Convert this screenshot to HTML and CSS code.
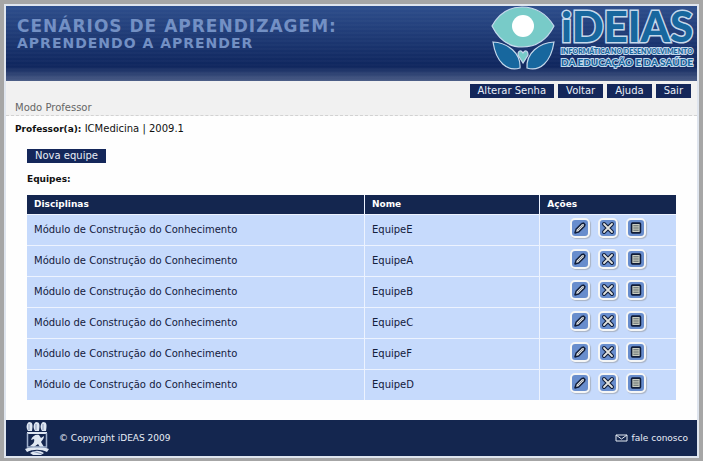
FILE: index.html
```html
<!DOCTYPE html>
<html lang="pt-BR">
<head>
<meta charset="utf-8">
<title>Cenários de Aprendizagem</title>
<link rel="stylesheet" href="styles.css">
</head>
<body>
<svg class="defs" aria-hidden="true">
  <symbol id="pencil" viewBox="0 0 18 18">
    <path d="M3.5 14.5 4.5 10.5 11 4 13 3.5 14.5 5 14 7 7.5 13.5Z" fill="#e2e4e2" stroke="#101c38" stroke-width="1.700" stroke-linejoin="round"/>
    <path d="M10.5 4.500 13.5 7.500M6.500 11.500 11.5 6.500" fill="none" stroke="#6f7889" stroke-width=".8"/>
    <path d="M3 15V12.800L5.200 15Z" fill="#101c38"/>
  </symbol>
  <symbol id="cross" viewBox="0 0 18 18">
    <path d="M4.500 4.500 13.500 13.500M13.500 4.500 4.500 13.500" stroke="#101c38" stroke-width="4.400" stroke-linecap="round"/>
    <path d="M4.500 4.500 13.500 13.500M13.500 4.500 4.500 13.500" stroke="#e2e3df" stroke-width="2" stroke-linecap="round"/>
  </symbol>
  <symbol id="list" viewBox="0 0 18 18">
    <rect x="4" y="3.500" width="10" height="11" rx="1" fill="#c9cdc0" stroke="#101c38" stroke-width="1.800"/>
    <path d="M6 6.500H12M6 9H12M6 11.500H12" stroke="#4f5a60" stroke-width="1"/>
  </symbol>
</svg>
<div class="page">
  <header class="banner">
    <div class="titles">
      <h1>CENÁRIOS DE APRENDIZAGEM:</h1>
      <p>APRENDENDO A APRENDER</p>
    </div>
    <svg class="logo" viewBox="0 0 208 66" role="img" aria-label="iDEIAS">
      <g stroke="#c5d9ec" stroke-width="1.200">
        <path d="M3 20C10 7 21 1 33 1S57 7 65 20C58 34 47 41 33 41S10 34 3 20Z" fill="#78cbc8"/>
        <path d="M4 36C19 37 32 47 31 62C18 66 7 56 4 36Z" fill="#17679e"/>
        <path d="M65 36C50 37 37 47 38 62C51 66 62 56 65 36Z" fill="#17679e"/>
        <path d="M34 57 29 49C29 44 32 44 34 47C36 44 39 44 39 49Z" fill="#78cbc8"/>
      </g>
      <circle cx="34" cy="20" r="11" fill="#fff"/>
      <text class="logo-name" x="72" y="36">iDEIAS</text>
      <text class="logo-line" x="72" y="48">INFORMÁTICA NO DESENVOLVIMENTO</text>
      <text class="logo-sub" x="72" y="60">DA EDUCAÇÃO E DA SAÚDE</text>
    </svg>
  </header>
  <div class="toolbar">
    <nav>
      <a class="btn" href="#">Alterar Senha</a>
      <a class="btn" href="#">Voltar</a>
      <a class="btn" href="#">Ajuda</a>
      <a class="btn" href="#">Sair</a>
    </nav>
    <p>Modo Professor</p>
  </div>
  <main>
    <p class="teacher"><b>Professor(a):</b> ICMedicina | 2009.1</p>
    <section class="teams">
      <button class="btn" type="button">Nova equipe</button>
      <h2>Equipes:</h2>
      <table>
        <thead><tr><th class="subject">Disciplinas</th><th class="name">Nome</th><th>Ações</th></tr></thead>
        <tbody>
          <tr><td>Módulo de Construção do Conhecimento</td><td>EquipeE</td><td><div class="actions"><button type="button" aria-label="Editar"><svg><use href="#pencil"/></svg></button><button type="button" aria-label="Excluir"><svg><use href="#cross"/></svg></button><button type="button" aria-label="Listar"><svg><use href="#list"/></svg></button></div></td></tr>
          <tr><td>Módulo de Construção do Conhecimento</td><td>EquipeA</td><td><div class="actions"><button type="button" aria-label="Editar"><svg><use href="#pencil"/></svg></button><button type="button" aria-label="Excluir"><svg><use href="#cross"/></svg></button><button type="button" aria-label="Listar"><svg><use href="#list"/></svg></button></div></td></tr>
          <tr><td>Módulo de Construção do Conhecimento</td><td>EquipeB</td><td><div class="actions"><button type="button" aria-label="Editar"><svg><use href="#pencil"/></svg></button><button type="button" aria-label="Excluir"><svg><use href="#cross"/></svg></button><button type="button" aria-label="Listar"><svg><use href="#list"/></svg></button></div></td></tr>
          <tr><td>Módulo de Construção do Conhecimento</td><td>EquipeC</td><td><div class="actions"><button type="button" aria-label="Editar"><svg><use href="#pencil"/></svg></button><button type="button" aria-label="Excluir"><svg><use href="#cross"/></svg></button><button type="button" aria-label="Listar"><svg><use href="#list"/></svg></button></div></td></tr>
          <tr><td>Módulo de Construção do Conhecimento</td><td>EquipeF</td><td><div class="actions"><button type="button" aria-label="Editar"><svg><use href="#pencil"/></svg></button><button type="button" aria-label="Excluir"><svg><use href="#cross"/></svg></button><button type="button" aria-label="Listar"><svg><use href="#list"/></svg></button></div></td></tr>
          <tr><td>Módulo de Construção do Conhecimento</td><td>EquipeD</td><td><div class="actions"><button type="button" aria-label="Editar"><svg><use href="#pencil"/></svg></button><button type="button" aria-label="Excluir"><svg><use href="#cross"/></svg></button><button type="button" aria-label="Listar"><svg><use href="#list"/></svg></button></div></td></tr>
        </tbody>
      </table>
    </section>
  </main>
  <footer>
    <svg class="crest" viewBox="0 0 26 35" aria-hidden="true">
      <g fill="#dfe7f2">
        <path d="M4 10C2 7 2 3 5 1C9 1 9 4 8 10ZM11 10C9 7 9 3 12 1C16 1 16 4 15 10ZM18 10C16 7 16 3 19 1C23 1 23 4 22 10Z"/>
        <path d="M3 11H23V13H3Z"/>
        <path d="M6 25C9 23 11 21 10 18L7 19C8 15 12 13 15 14L17 17 20 15C20 18 18 19 17 21L20 26H16L14 23 10 26Z"/>
        <path d="M1 28C8 25 18 25 25 28L23 31C17 28 9 28 3 31ZM6 32C11 29 15 29 20 32L17 34H9Z"/>
      </g>
      <path d="M3.500 12V26H22.500V12" fill="none" stroke="#9fb0cc" stroke-width="1.500"/>
      <path d="M5 3V9M12 3V9M19 3V9M8 30 18 33" stroke="#63779d" stroke-width=".7"/>
    </svg>
    <span>© Copyright iDEAS 2009</span>
    <a class="contact" href="#">
      <svg viewBox="0 0 13 8" aria-hidden="true"><path d="M1 1H12V7H1ZM1 1 6.500 5 12 1" fill="none" stroke="#e3e9f2"/></svg>
      fale conosco
    </a>
  </footer>
</div>
</body>
</html>
```
FILE: styles.css
```css
* {
  box-sizing: border-box;
}

body {
  margin: 0;
  padding: 4px 4px 3px;
  min-height: 100vh;
  background: #a6a6a6;
  color: #111;
  font: 10px/14px "DejaVu Sans", Verdana, sans-serif;
}

h1, h2, p {
  margin: 0;
}

a {
  color: inherit;
  text-decoration: none;
}

.defs {
  display: none;
}

.page {
  border: 2px solid #dfe5ee;
  background: #fefefe;
}

.banner {
  display: flex;
  justify-content: space-between;
  height: 75px;
  padding-left: 11px;
  background:
    repeating-linear-gradient(transparent 0 2px, rgba(255, 255, 255, .02) 2px 4px),
    linear-gradient(#2e4e8c, #0f265e 60px, #162c62 62px, #4a5c86);
  color: #7390c4;
}

.titles {
  padding-top: 11px;
  letter-spacing: 1px;
}

.titles h1 {
  font-size: 17px;
  line-height: 18px;
}

.titles p {
  font-size: 14px;
  font-weight: bold;
  line-height: 16px;
}

.logo {
  flex: none;
  width: 208px;
  height: 66px;
}

.logo text {
  font-family: Lato, sans-serif;
  font-weight: 900;
  fill: #17679e;
  stroke: #c5d9ec;
  paint-order: stroke;
}

.logo-name {
  font-size: 42px;
  stroke-width: 3px;
}

.logo .logo-line,
.logo .logo-sub {
  stroke-width: 2px;
}

.logo-line {
  font-size: 7px;
}

.logo-sub {
  font-size: 10px;
}

.toolbar {
  padding: 3px 6px 0 9px;
  border-bottom: 1px dashed #d2d2d2;
  background: #f1f1f1;
  color: #666;
}

.toolbar nav {
  display: flex;
  justify-content: flex-end;
  gap: 4px;
}

.toolbar p {
  padding: 3px 0 0;
}

.btn {
  padding: 0 8px;
  border: 0;
  background: #14275a;
  color: #e8edf6;
  font: inherit;
}

.teacher {
  padding: 6px 9px 0;
}

.teacher b {
  font-size: 9px;
}

.teams {
  padding: 13px 21px 20px;
}

.teams h2 {
  margin: 9px 0;
  font-size: 9px;
  line-height: 14px;
}

.teams .btn {
  display: block;
}

table {
  width: 100%;
  border-collapse: collapse;
  table-layout: fixed;
}

.subject {
  width: 52%;
}

.name {
  width: 27%;
}

th {
  height: 19px;
  padding: 0 7px;
  background: #14264f;
  color: #fff;
  font-size: 9px;
  text-align: left;
}

td {
  height: 31px;
  padding: 0 7px;
  border-top: 1px solid #edf3ff;
  background: #c6dafc;
  color: #14203c;
}

th + th,
td + td {
  border-left: 1px solid #edf3ff;
}

.actions {
  display: flex;
  justify-content: center;
  gap: 8px;
  padding-bottom: 3px;
}

.actions button {
  display: block;
  width: 20px;
  height: 20px;
  padding: 0;
  border: 2px solid #f5f6f6;
  border-radius: 5px;
  background: #688dcd;
  box-shadow: 1px 1px 1px #a9b3c4;
}

.actions svg {
  display: block;
  width: 16px;
  height: 16px;
}

footer {
  display: flex;
  align-items: center;
  height: 36px;
  padding: 0 9px 0 18px;
  background: #14264f;
  color: #e8edf6;
  font-size: 9px;
}

.crest {
  width: 26px;
  height: 35px;
  margin-right: 9px;
}

.contact {
  display: flex;
  align-items: center;
  gap: 4px;
  margin-left: auto;
}

.contact svg {
  width: 13px;
  height: 8px;
}
```
